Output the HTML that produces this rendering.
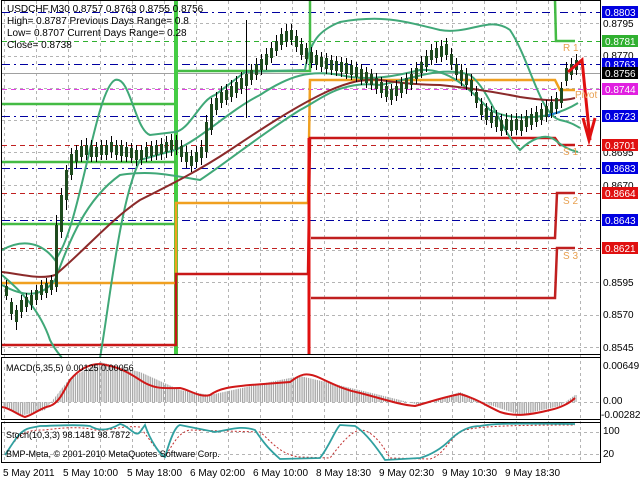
<!DOCTYPE html>
<html><head><meta charset="utf-8"><style>
html,body{margin:0;padding:0;background:#fff;width:640px;height:480px;overflow:hidden}
svg{display:block;font-family:"Liberation Sans",sans-serif}
</style></head><body>
<svg width="640" height="480" xmlns="http://www.w3.org/2000/svg">
<defs>
<pattern id="hp" width="2.2" height="10" patternUnits="userSpaceOnUse"><rect width="1.3" height="10" fill="#a8a8a8"/></pattern>
</defs>
<rect width="640" height="480" fill="#fff"/>
<path fill="none" stroke="#b4b4b4" stroke-dasharray="3,3" d="M4.5,1V462M36.5,1V462M68.5,1V462M100.5,1V462M132.5,1V462M164.5,1V462M196.5,1V462M228.5,1V462M260.5,1V462M292.5,1V462M324.5,1V462M356.5,1V462M388.5,1V462M420.5,1V462M452.5,1V462M484.5,1V462M516.5,1V462M548.5,1V462M580.5,1V462M2,23.5H600M2,56.5H600M2,88.5H600M2,120.5H600M2,152.5H600M2,185.5H600M2,217.5H600M2,250.5H600M2,282.5H600M2,315.5H600M2,347.5H600"/>
<g stroke-width="1" fill="none">
<line x1="2" x2="600" y1="12.5" y2="12.5" stroke="#0000a0" stroke-dasharray="8,4,2,4"/>
<line x1="2" x2="600" y1="64.5" y2="64.5" stroke="#0000a0" stroke-dasharray="8,4,2,4"/>
<line x1="2" x2="600" y1="116.5" y2="116.5" stroke="#0000a0" stroke-dasharray="8,4,2,4"/>
<line x1="2" x2="600" y1="168.5" y2="168.5" stroke="#0000a0" stroke-dasharray="8,4,2,4"/>
<line x1="2" x2="600" y1="220.5" y2="220.5" stroke="#0000a0" stroke-dasharray="8,4,2,4"/>
<line x1="2" x2="600" y1="41.5" y2="41.5" stroke="#30b030" stroke-dasharray="5,4"/>
<line x1="2" x2="600" y1="89.5" y2="89.5" stroke="#e040e0" stroke-dasharray="5,4"/>
<line x1="2" x2="600" y1="145.5" y2="145.5" stroke="#c02020" stroke-dasharray="5,4"/>
<line x1="2" x2="600" y1="193.5" y2="193.5" stroke="#c02020" stroke-dasharray="5,4"/>
<line x1="2" x2="600" y1="248.5" y2="248.5" stroke="#c02020" stroke-dasharray="5,4"/>
<line x1="2" x2="600" y1="73.5" y2="73.5" stroke="#a0a0a0"/>
</g>
<g fill="none" stroke-width="2.5">
<polyline stroke="#44bb44" points="2,104 176,104"/>
<polyline stroke="#44bb44" points="176,71 310,71 310,0"/>
<line x1="176" y1="0" x2="176" y2="355" stroke="#44cc44" stroke-width="4"/>
<polyline stroke="#44bb44" points="2,162 176,162"/>
<polyline stroke="#44bb44" points="2,224 176,224"/>
<polyline stroke="#44bb44" points="555,0 556,41 575,41"/>
<polyline stroke="#f0a020" points="2,283 176,283 176,203 308,203 310,80 555,80 560,90 575,90"/>
<polyline stroke="#c81818" points="2,345 176,345 176,274 308,274 310,138 555,138 560,145 575,145"/>
<polyline stroke="#c02020" points="311,238 555,238 557,193 575,193"/>
<polyline stroke="#c02020" points="311,298 555,298 557,248 575,248"/>
<line x1="309" y1="138" x2="309" y2="355" stroke="#e01010" stroke-width="3"/>
</g>
<g fill="none" stroke-width="2">
<path stroke="#40a878" d="M2,250 C20,240 40,240 55,260 C80,230 95,90 115,80 C130,75 135,130 150,135 L175,132 C190,130 200,100 215,95 L245,72 L305,70 C310,40 320,30 340,22 C380,15 400,20 440,30 C470,35 490,15 510,30 C530,60 540,115 560,120 C570,122 575,125 580,128"/>
<path stroke="#40a878" d="M2,285 C20,295 40,300 55,280 C70,240 85,200 120,175 C150,170 170,175 200,180 C230,160 260,135 300,110 C320,100 340,80 380,85 C410,80 440,65 470,75 C490,90 500,130 520,150 C530,140 545,132 555,140 C565,148 570,150 578,152"/>
<path stroke="#40a878" d="M2,275 C20,290 40,310 50,340 C55,350 60,355 62,358 M100,358 C110,300 120,200 140,160 L175,150 C200,140 230,110 260,95 C290,75 310,70 340,75 C370,82 400,75 420,70 C450,68 470,90 490,110 C510,120 530,118 550,115 C560,112 570,108 578,103"/>
<path stroke="#8b2a2a" d="M2,272 C20,274 40,280 55,275 C80,255 110,220 140,200 C170,185 200,170 230,150 C260,130 290,110 320,95 C340,85 360,78 380,80 C400,83 420,85 440,85 C470,88 500,93 520,97 C540,100 560,102 575,98"/>
<path stroke="#2080d0" d="M545,116 L560,112"/>
</g>
<!-- candles: wicks -->
<path fill="none" stroke="#000" stroke-width="1" d="M6.5,280V300M11.5,298V320M16.5,305V330M21.5,295V318M26.5,293V312M31.5,290V310M36.5,285V305M41.5,280V300M46.5,278V298M51.5,275V295M56.5,215V292M61.5,188V238M66.5,165V210M71.5,148V180M76.5,145V168M81.5,140V162M86.5,138V160M91.5,140V162M96.5,142V162M101.5,140V160M106.5,140V160M111.5,136V158M116.5,140V160M121.5,140V162M126.5,142V162M131.5,143V163M136.5,145V166M141.5,145V165M146.5,142V162M151.5,141V161M156.5,140V160M161.5,138V160M166.5,136V158M171.5,134V156M176.5,135V155M181.5,140V162M186.5,146V168M191.5,150V172M196.5,146V168M201.5,140V165M206.5,115V158M211.5,98V135M216.5,92V115M221.5,86V108M226.5,84V105M231.5,80V102M236.5,76V98M241.5,72V94M246.5,20V118M251.5,64V85M256.5,58V80M261.5,54V75M266.5,48V70M271.5,42V63M276.5,35V56M281.5,28V50M286.5,24V47M291.5,24V45M296.5,30V52M301.5,38V60M306.5,43V64M311.5,47V68M316.5,50V70M321.5,52V72M326.5,53V74M331.5,55V75M336.5,56V76M341.5,57V77M346.5,58V79M351.5,60V80M356.5,62V82M361.5,64V85M366.5,67V88M371.5,69V90M376.5,73V94M381.5,77V98M386.5,80V102M391.5,84V105M396.5,80V101M401.5,77V98M406.5,73V94M411.5,68V90M416.5,62V84M421.5,56V78M426.5,50V72M431.5,44V65M436.5,42V63M441.5,40V62M446.5,38V60M451.5,48V70M456.5,58V80M461.5,64V86M466.5,68V90M471.5,74V96M476.5,86V108M481.5,98V120M486.5,103V125M491.5,106V128M496.5,110V132M501.5,114V136M506.5,113V135M511.5,114V136M516.5,113V135M521.5,114V136M526.5,110V132M531.5,108V130M536.5,106V127M541.5,103V125M546.5,100V122M551.5,96V118M556.5,92V114M561.5,82V108M566.5,62V86M571.5,58V80M576.5,54V75"/>
<!-- candles: bodies -->
<path fill="none" stroke="#1e4a1e" stroke-width="3" d="M6.5,286V296M11.5,302V314M16.5,310V322M21.5,300V312M26.5,297V307M31.5,295V305M36.5,290V300M41.5,285V295M46.5,283V293M51.5,280V290M56.5,225V287M61.5,195V232M66.5,170V200M71.5,154V175M76.5,150V162M81.5,146V157M86.5,145V155M91.5,145V157M96.5,147V157M101.5,145V155M106.5,145V155M111.5,142V152M116.5,145V155M121.5,145V156M126.5,147V157M131.5,148V158M136.5,150V160M141.5,150V160M146.5,147V157M151.5,146V156M156.5,145V155M161.5,144V154M166.5,142V152M171.5,140V150M176.5,140V150M181.5,146V157M186.5,152V162M191.5,156V166M196.5,152V162M201.5,147V158M206.5,122V152M211.5,104V130M216.5,98V110M221.5,92V103M226.5,90V100M231.5,86V97M236.5,82V93M241.5,78V89M246.5,74V86M251.5,70V80M256.5,64V75M261.5,59V70M266.5,54V65M271.5,48V58M276.5,41V51M281.5,34V45M286.5,31V42M291.5,30V40M296.5,36V47M301.5,44V55M306.5,48V59M311.5,52V63M316.5,55V65M321.5,57V67M326.5,58V69M331.5,60V70M336.5,61V71M341.5,62V72M346.5,63V74M351.5,65V75M356.5,67V77M361.5,69V80M366.5,72V83M371.5,74V85M376.5,78V89M381.5,82V93M386.5,86V97M391.5,89V100M396.5,86V96M401.5,82V93M406.5,78V89M411.5,74V85M416.5,68V79M421.5,62V73M426.5,56V67M431.5,50V60M436.5,48V58M441.5,46V57M446.5,44V55M451.5,54V65M456.5,64V75M461.5,70V81M466.5,74V85M471.5,80V91M476.5,92V103M481.5,104V115M486.5,108V120M491.5,112V123M496.5,116V127M501.5,120V131M506.5,119V130M511.5,120V131M516.5,119V130M521.5,120V131M526.5,116V127M531.5,114V125M536.5,112V122M541.5,109V120M546.5,106V117M551.5,102V113M556.5,98V109M561.5,88V103M566.5,68V81M571.5,64V75M576.5,60V70"/>
<g fill="none" stroke="#e01010" stroke-width="3">
<polyline points="568,72 582,60 590,140"/>
<polyline points="583,118 589,140 595,118"/>
</g>
<g fill="none" stroke="#000" stroke-width="1">
<rect x="1.5" y="0.5" width="599" height="354"/>
<line x1="1" x2="601" y1="357.5" y2="357.5"/>
<rect x="1.5" y="357.5" width="599" height="62"/>
<rect x="1.5" y="422.5" width="599" height="40"/>
</g>
<g font-size="10" fill="#000">
<text x="7" y="12">USDCHF,M30  0.8757 0.8763 0.8755 0.8756</text>
<text x="7" y="24">High= 0.8787   Previous Days Range= 0.8</text>
<text x="7" y="36">Low= 0.8707    Current Days Range= 0.28</text>
<text x="7" y="48">Close= 0.8738</text>
</g>
<g font-size="10" fill="#e8a050">
<text x="563" y="51">R 1</text>
<text x="575" y="98">Pivot</text>
<text x="563" y="155">S 1</text>
<text x="563" y="204">S 2</text>
<text x="563" y="259">S 3</text>
</g>
<rect x="601" y="0" width="40" height="480" fill="#fff"/>
<line x1="600.5" x2="600.5" y1="0" y2="463" stroke="#000"/>
<g font-size="10" fill="#000">
<text x="603" y="27">0.8795</text>
<text x="603" y="59">0.8770</text>
<text x="603" y="156">0.8695</text>
<text x="603" y="189">0.8670</text>
<text x="603" y="286">0.8595</text>
<text x="603" y="318">0.8570</text>
<text x="603" y="351">0.8545</text>
<text x="603" y="369">0.00649</text>
<text x="603" y="404">0.00</text>
<text x="601" y="418">-0.00282</text>
<text x="603" y="434">100</text>
<text x="603" y="457">20</text>
</g>
<g font-size="10" fill="#fff">
<rect x="602" y="6" width="36" height="12" fill="#0000e0"/><text x="605" y="16">0.8803</text>
<rect x="602" y="35" width="36" height="12" fill="#30b030"/><text x="605" y="45">0.8781</text>
<rect x="602" y="58" width="36" height="12" fill="#0000e0"/><text x="605" y="68">0.8763</text>
<rect x="602" y="67" width="36" height="12" fill="#000"/><text x="605" y="77">0.8756</text>
<rect x="602" y="83" width="36" height="12" fill="#e020e0"/><text x="605" y="93">0.8744</text>
<rect x="602" y="110" width="36" height="12" fill="#0000e0"/><text x="605" y="120">0.8723</text>
<rect x="602" y="139" width="36" height="12" fill="#e01010"/><text x="605" y="149">0.8701</text>
<rect x="602" y="162" width="36" height="12" fill="#0000e0"/><text x="605" y="172">0.8683</text>
<rect x="602" y="187" width="36" height="12" fill="#e01010"/><text x="605" y="197">0.8664</text>
<rect x="602" y="214" width="36" height="12" fill="#0000e0"/><text x="605" y="224">0.8643</text>
<rect x="602" y="242" width="36" height="12" fill="#e01010"/><text x="605" y="252">0.8621</text>
</g>
<!-- MACD histogram -->
<path fill="url(#hp)" d="M3,402 L3,406 L20,416 L45,410 L70,378 L100,362 L140,372 L180,390 L210,395 L260,384 L300,376 L330,383 L380,395 L420,405 L460,392 L490,405 L520,415 L560,406 L575,395 L577,395 L577,402 Z"/>
<line x1="2" x2="600" y1="402.5" y2="402.5" stroke="#b4b4b4" stroke-dasharray="3,3"/>
<path fill="none" stroke="#d01818" stroke-width="2" d="M2,407 C10,408 18,415 25,417 C35,414 40,408 50,406 C58,403 62,395 70,380 C80,368 90,364 100,364 C115,366 125,370 140,380 C155,390 165,388 180,388 C190,390 200,398 210,395 C220,388 230,387 250,385 L290,382 C300,375 305,371 320,378 C335,385 345,390 360,393 C380,398 400,405 415,406 C430,402 440,398 460,394 C475,398 485,405 500,412 C515,417 530,415 550,410 C560,408 570,403 575,398"/>
<text x="6" y="371" font-size="9" fill="#000">MACD(5,35,5) 0.00125 0.00056</text>
<line x1="2" x2="600" y1="432.5" y2="432.5" stroke="#b4b4b4" stroke-dasharray="3,3"/>
<line x1="2" x2="600" y1="454.5" y2="454.5" stroke="#b4b4b4" stroke-dasharray="3,3"/>
<path fill="none" stroke="#c03030" stroke-width="1" stroke-dasharray="2,2" d="M5,455 C20,430 30,430 45,430 C60,428 80,426 95,430 C110,432 120,425 140,427 C150,440 160,455 165,457 C175,440 180,432 190,430 L260,432 C270,440 280,455 300,457 L330,458 C340,445 350,432 360,430 C370,430 380,440 390,458 L430,459 C445,455 450,435 465,430 C475,428 485,425 575,425"/>
<path fill="none" stroke="#30a0a0" stroke-width="1.8" d="M5,455 C15,440 20,430 30,428 L40,426 C55,426 75,424 90,426 C100,432 110,430 120,424 C130,426 135,438 140,432 L145,425 C150,440 160,455 165,457 C170,440 175,426 180,425 L215,432 C230,430 240,425 255,430 C265,445 270,450 280,459 L320,458 C330,445 335,430 340,425 L355,426 C365,432 375,445 385,460 L420,458 C430,455 440,450 450,440 C460,430 470,426 480,426 C490,424 500,423 575,424"/>
<text x="6" y="438" font-size="9" fill="#000">Stoch(10,3,3) 98.1481 98.7872</text>
<text x="6" y="457" font-size="9" fill="#000">BMP-Meta, © 2001-2010 MetaQuotes Software Corp.</text>
<g font-size="10" fill="#000">
<text x="3" y="476">5 May 2011</text>
<text x="63" y="476">5 May 10:00</text>
<text x="127" y="476">5 May 18:00</text>
<text x="190" y="476">6 May 02:00</text>
<text x="253" y="476">6 May 10:00</text>
<text x="316" y="476">8 May 18:30</text>
<text x="379" y="476">9 May 02:30</text>
<text x="442" y="476">9 May 10:30</text>
<text x="505" y="476">9 May 18:30</text>
</g>
</svg>
</body></html>
